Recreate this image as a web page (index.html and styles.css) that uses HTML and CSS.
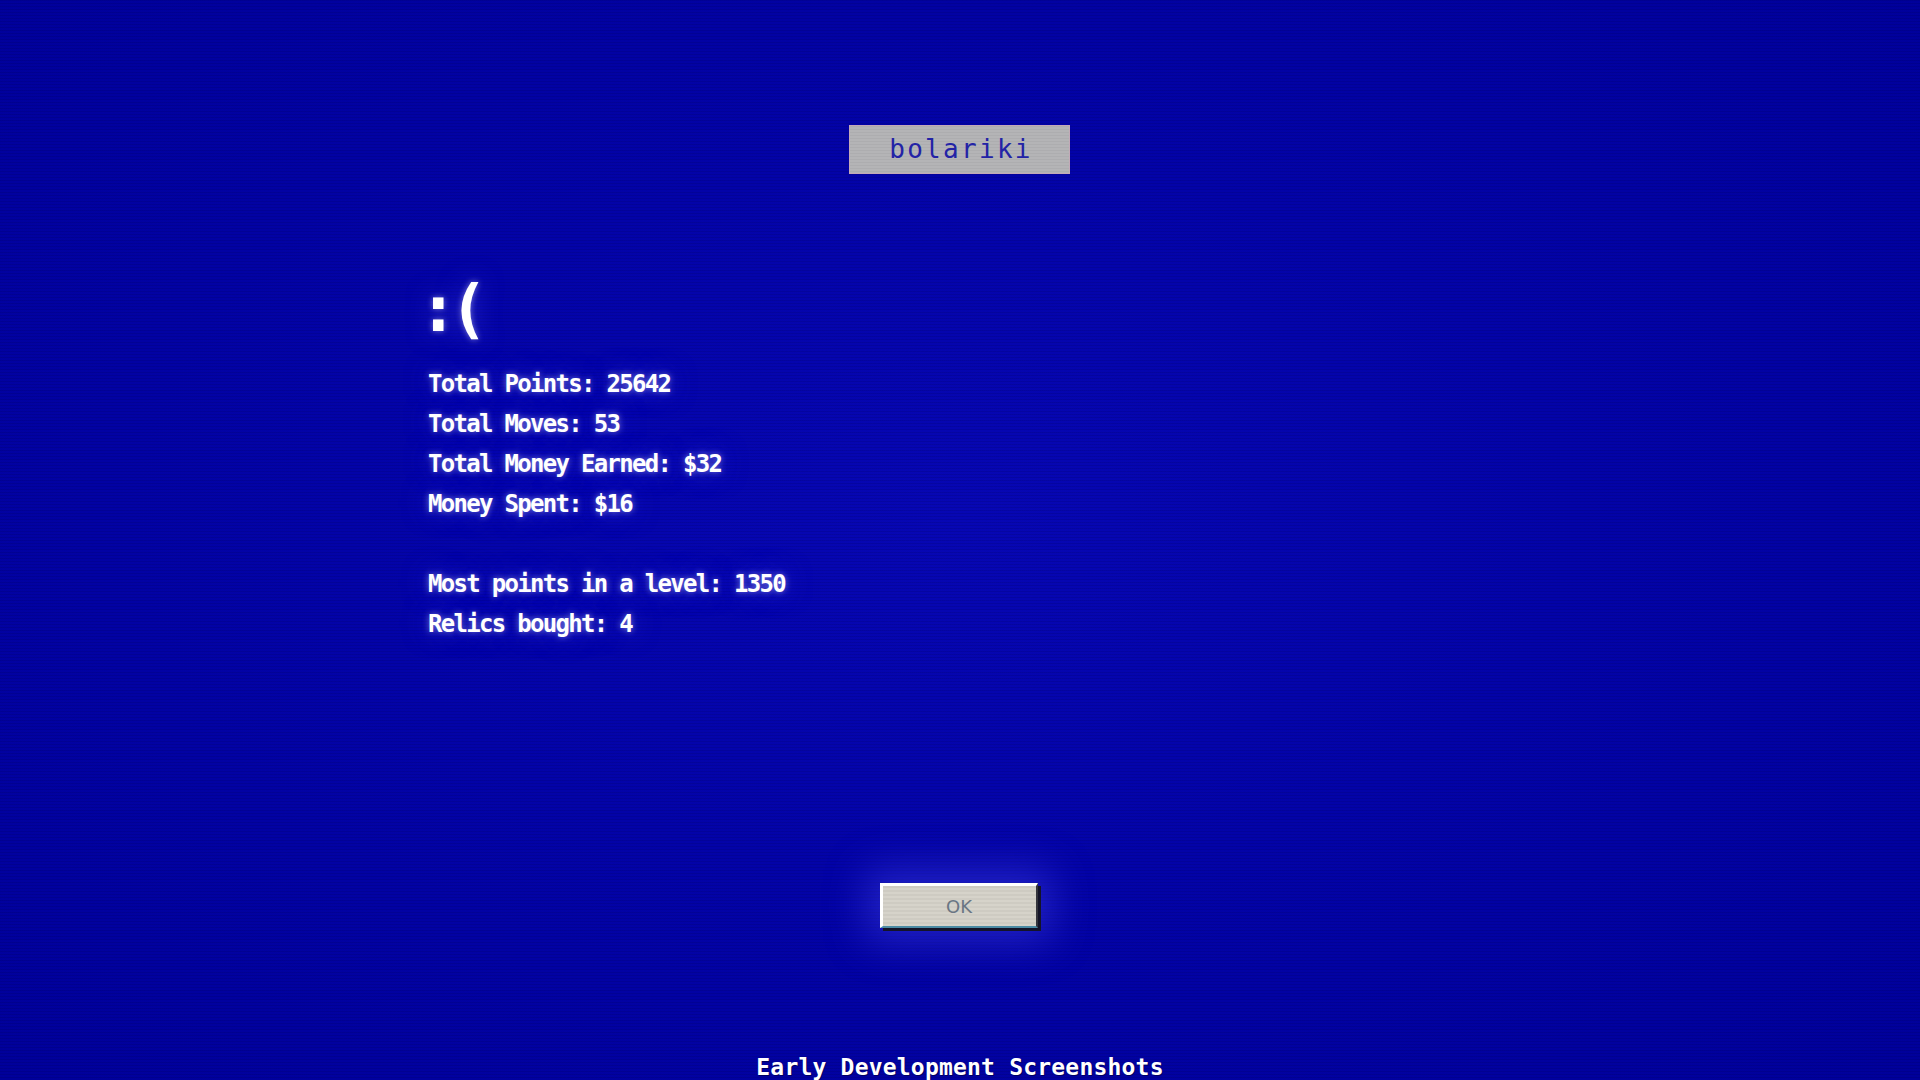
FILE: index.html
```html
<!DOCTYPE html>
<html lang="en">
<head>
  <meta charset="UTF-8">
  <title>bolariki</title>
  <link rel="stylesheet" href="styles.css">
</head>
<body>

  <div class="screen">
    <div class="title-bar">bolariki</div>

    <div class="report">
      <div class="sad-face">:(</div>

      <ul class="stats">
        <li>Total Points: 25642</li>
        <li>Total Moves: 53</li>
        <li>Total Money Earned: $32</li>
        <li>Money Spent: $16</li>
      </ul>

      <ul class="stats extra">
        <li>Most points in a level: 1350</li>
        <li>Relics bought: 4</li>
      </ul>
    </div>

    <button class="ok-btn" type="button">OK</button>

    <div class="footer">Early Development Screenshots</div>
  </div>

</body>
</html>
```

FILE: styles.css
```css
html, body {
  margin: 0;
  height: 100%;
  overflow: hidden;
}

body {
  font-family: "DejaVu Sans Mono", "Liberation Mono", monospace;
  background-color: #00009e;
  background-image:
    repeating-linear-gradient(to bottom, rgba(0, 0, 40, 0.12) 0, rgba(0, 0, 40, 0.12) 1px, transparent 1px, transparent 3px),
    radial-gradient(ellipse at 50% 48%, #0707b4 0%, #0303a8 45%, #00009a 100%);
  color: #fff;
}

.screen {
  height: 1080px;
  display: flex;
  flex-direction: column;
  align-items: center;
}

.title-bar {
  margin-top: 125px;
  margin-right: 2px;
  width: 221px;
  height: 49px;
  box-sizing: border-box;
  border: 1px solid #c4aab8;
  background-color: #b4b4b6;
  background-image: repeating-linear-gradient(to bottom, rgba(0, 0, 0, 0.04) 0, rgba(0, 0, 0, 0.04) 1px, transparent 1px, transparent 3px);
  color: #2323a6;
  font-size: 26px;
  letter-spacing: 2.3px;
  line-height: 46px;
  text-align: center;
  padding-left: 4px;
}

.report {
  align-self: flex-start;
  margin-left: 428px;
  margin-top: 103px;
  text-shadow: 0 0 6px rgba(210, 210, 255, 0.55), 0 0 26px rgba(90, 90, 255, 0.6);
}

.sad-face {
  font-size: 64px;
  font-weight: bold;
  line-height: 64px;
  letter-spacing: -8px;
  margin-left: -9px;
}

.stats {
  list-style: none;
  margin: 23px 0 0 0;
  padding: 0;
  font-size: 24px;
  font-weight: bold;
  line-height: 40px;
  letter-spacing: -1.7px;
}

.stats.extra {
  margin-top: 40px;
}

.ok-btn {
  margin-top: 239px;
  margin-right: 3px;
  width: 158px;
  height: 45px;
  box-sizing: border-box;
  border-top: 3px solid #ffffff;
  border-left: 3px solid #ffffff;
  border-right: 2px solid #34343c;
  border-bottom: 2px solid #4b8ba4;
  background-color: #d6d3ca;
  background-image: repeating-linear-gradient(to bottom, rgba(0, 0, 0, 0.04) 0, rgba(0, 0, 0, 0.04) 2px, transparent 2px, transparent 4px);
  box-shadow: 3px 3px 0 #141428, 0 0 40px 14px rgba(70, 70, 240, 0.45);
  font-family: "DejaVu Sans", sans-serif;
  font-size: 18px;
  color: #6a7684;
  padding: 0;
}

.footer {
  margin-top: auto;
  font-size: 23px;
  font-weight: bold;
  line-height: 23px;
  letter-spacing: 0.2px;
  margin-bottom: 1px;
  text-shadow: 1px 1px 0 #000060;
}
```
